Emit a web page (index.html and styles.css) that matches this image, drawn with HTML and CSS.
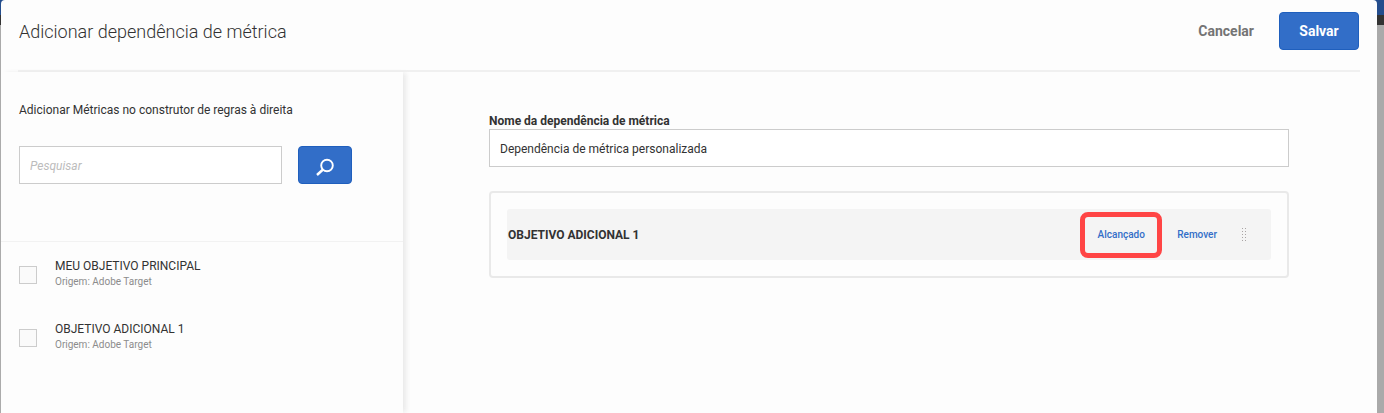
FILE: index.html
```html
<!DOCTYPE html>
<html lang="pt-BR">
<head>
<meta charset="utf-8">
<title>Adicionar dependência de métrica</title>
<link rel="stylesheet" href="styles.css">
</head>
<body>
<div class="dialog" role="dialog" aria-labelledby="dialog-title">
  <header class="header">
    <h1 class="title" id="dialog-title">Adicionar dependência de métrica</h1>
    <div class="actions">
      <button class="cancel" type="button">Cancelar</button>
      <button class="primary save" type="button">Salvar</button>
    </div>
  </header>
  <div class="body">
    <aside class="sidebar">
      <div class="finder">
        <h2 class="hint">Adicionar Métricas no construtor de regras à direita</h2>
        <form class="search">
          <input class="field search-field" type="text" placeholder="Pesquisar" aria-label="Pesquisar">
          <button class="primary search-button" type="button" aria-label="Pesquisar">
            <svg width="20" height="24" viewBox="0 0 20 24" fill="none" stroke="#fff" stroke-width="1.900">
              <circle cx="12" cy="12.500" r="5.800"/>
              <path d="M8 16.500 2 22" stroke-width="2.400"/>
            </svg>
          </button>
        </form>
      </div>
      <ul class="metrics">
        <li class="metric">
          <input class="check" type="checkbox" id="metric-main">
          <label class="metric-label" for="metric-main">
            <span class="metric-name">MEU OBJETIVO PRINCIPAL</span>
            <span class="metric-source">Origem: Adobe Target</span>
          </label>
        </li>
        <li class="metric">
          <input class="check" type="checkbox" id="metric-extra">
          <label class="metric-label" for="metric-extra">
            <span class="metric-name">OBJETIVO ADICIONAL 1</span>
            <span class="metric-source">Origem: Adobe Target</span>
          </label>
        </li>
      </ul>
    </aside>
    <main class="builder">
      <label class="name-label" for="dependency-name">Nome da dependência de métrica</label>
      <input class="field" type="text" id="dependency-name" value="Dependência de métrica personalizada">
      <section class="rules">
        <div class="rule">
          <strong class="rule-name">OBJETIVO ADICIONAL 1</strong>
          <button class="link highlighted" type="button">Alcançado</button>
          <button class="link remove" type="button">Remover</button>
          <svg class="grip" width="6" height="14" viewBox="0 0 6 14" stroke="#a9a4a4" stroke-dasharray="1 2" aria-hidden="true">
            <path d="M1.500 0V14M4.500 0V14"/>
          </svg>
        </div>
      </section>
    </main>
  </div>
</div>
</body>
</html>
```
FILE: styles.css
```css
* {
  box-sizing: border-box;
}

body {
  margin: 0;
  min-height: 100vh;
  padding: 0 7px 0 1px;
  display: flex;
  background: linear-gradient(#244d8d 15px, #333 15px, #333 25px, #aaa 25px);
  color: #323232;
  font: 400 12px/16px Roboto, "Open Sans", sans-serif;
}

button,
input {
  font: inherit;
  color: inherit;
}

button {
  padding: 0;
  border: 0;
  background: none;
  cursor: pointer;
}

.dialog {
  flex: 1;
  display: flex;
  flex-direction: column;
  border-radius: 4px 4px 0 0;
  background: #fdfdfd;
}

.header {
  display: flex;
  align-items: center;
  justify-content: space-between;
  margin: 0 17px;
  padding: 12px 1px 20px;
  border-bottom: 2px solid #f0f0f0;
}

.title {
  margin: 0;
  padding-top: 2px;
  font-size: 18px;
  font-weight: 300;
  line-height: 28px;
}

.actions {
  display: flex;
  gap: 25px;
  font-size: 14px;
  font-weight: 700;
}

.cancel {
  color: #747474;
}

.primary {
  height: 38px;
  border: 1px solid #1f5fbd;
  border-radius: 4px;
  background: #326ec8;
  color: #fff;
}

.save {
  width: 80px;
}

.body {
  flex: 1;
  display: flex;
}

.sidebar {
  flex: 0 0 402px;
  box-shadow: 4px 0 5px -1px #e9e9e9;
}

.finder {
  padding: 30px 18px 57px;
  border-bottom: 1px solid #f2f2f2;
}

.hint {
  margin: 0 0 28px;
  font-size: 12px;
  font-weight: 400;
}

.search {
  display: flex;
  gap: 16px;
}

.field {
  width: 100%;
  height: 38px;
  padding: 1px 10px 0;
  border: 1px solid #ccc;
  border-radius: 0;
  background: #fff;
}

.search-field {
  width: 263px;
}

.search-field::placeholder {
  color: #bcbcbc;
  font-style: italic;
}

.search-button {
  display: flex;
  align-items: center;
  justify-content: center;
  width: 54px;
}

.metrics {
  display: grid;
  gap: 31px;
  margin: 0;
  padding: 16px 18px;
  list-style: none;
}

.metric {
  display: flex;
  align-items: end;
  gap: 18px;
}

.check {
  appearance: none;
  width: 18px;
  height: 18px;
  margin: 0 0 6px;
  border: 1px solid #ccc;
  background: #fafafa;
}

.metric-label {
  display: grid;
}

.metric-source {
  color: #8c8c8c;
  font-size: 10px;
}

.builder {
  flex: 1;
  padding: 41px 88px 0 86px;
}

.name-label {
  display: block;
  font-weight: 700;
}

.rules {
  margin-top: 24px;
  padding: 16px;
  border: 2px solid #e9e9e9;
  border-radius: 4px;
}

.rule {
  display: flex;
  align-items: center;
  height: 51px;
  padding: 0 24px 0 1px;
  border-radius: 3px;
  background: #f4f4f4;
}

.rule-name {
  flex: 1;
  font-weight: 700;
}

.link {
  color: #326ec8;
  font-size: 10px;
  font-weight: 500;
}

.highlighted {
  width: 82px;
  height: 46px;
  border: 5px solid #ff4545;
  border-radius: 8px;
}

.remove {
  margin: 0 24px 0 15px;
}
```
